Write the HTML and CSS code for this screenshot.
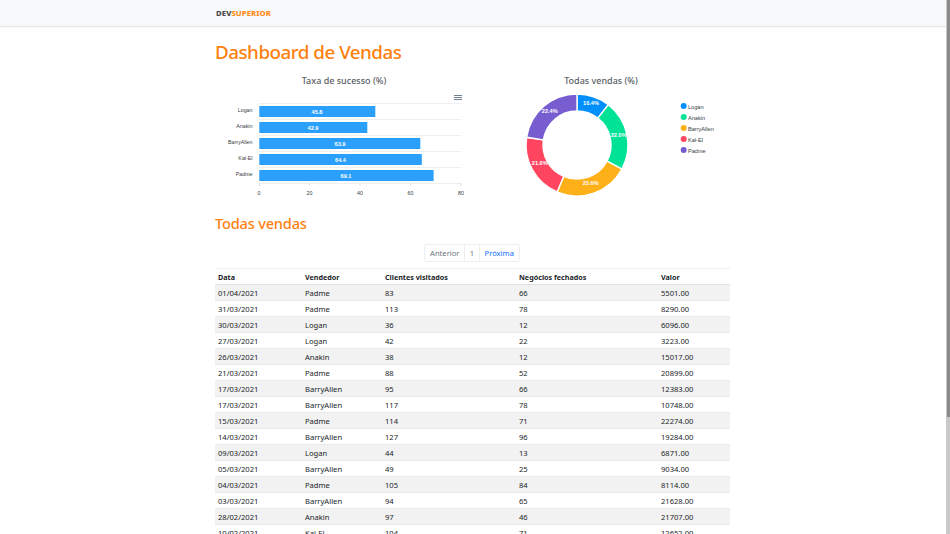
FILE: index.html
```html
<!DOCTYPE html>
<html lang="pt-BR">
<head>
    <meta charset="UTF-8">
    <meta name="viewport" content="width=device-width, initial-scale=1.0">
    <title>DSVendas</title>
    <link rel="stylesheet" href="styles.css">
</head>
<body>
    <header class="navbar">
        <div class="container">
            <span class="logo">DEV<span class="logoAccent">SUPERIOR</span></span>
        </div>
    </header>
    <main class="container">
        <h1 class="title">Dashboard de Vendas</h1>
        <div class="charts">
            <svg class="barChart" width="258" height="135" viewBox="0 0 258 135">
                <text class="chartTitle" x="129" y="14">Taxa de sucesso (%)</text>
                <!-- menu -->
                <path class="menuIcon" d="M239 25.5h8M239 27.5h8M239 29.5h8"/>
                <!-- grade -->
                <path class="grid" d="M44 33.5h202M44 49.5h202M44 65.5h202M44 81.5h202M44 97.5h202M44 113.5h202"/>
                <rect class="bar" x="44.300" y="36" width="116" height="11"/>
                <rect class="bar" x="44.300" y="52" width="108" height="11"/>
                <rect class="bar" x="44.300" y="68" width="161" height="11"/>
                <rect class="bar" x="44.300" y="84" width="162.500" height="11"/>
                <rect class="bar" x="44.300" y="100" width="174.300" height="11"/>
                <text class="barValue" x="102" y="43.500">45.8</text>
                <text class="barValue" x="98" y="59.500">42.9</text>
                <text class="barValue" x="125" y="75.500">63.9</text>
                <text class="barValue" x="125.500" y="91.500">64.4</text>
                <text class="barValue" x="131" y="107.500">69.1</text>
                <text class="barLabel" x="37.500" y="41.500">Logan</text>
                <text class="barLabel" x="37.500" y="58">Anakin</text>
                <text class="barLabel" x="37.500" y="74">BarryAllen</text>
                <text class="barLabel" x="37.500" y="90">Kal-El</text>
                <text class="barLabel" x="37.500" y="106">Padme</text>
                <path class="axis" d="M44.500 113v3M94.500 113v3M145 113v3M195.500 113v3M246 113v3"/>
                <text class="tick" x="44" y="124.500">0</text>
                <text class="tick" x="94.500" y="124.500">20</text>
                <text class="tick" x="145" y="124.500">40</text>
                <text class="tick" x="195.500" y="124.500">60</text>
                <text class="tick" x="246" y="124.500">80</text>
            </svg>
            <svg class="donutChart" width="258" height="135" viewBox="0 0 258 135">
                <text class="chartTitle" x="128" y="14">Todas vendas (%)</text>
                <g transform="translate(104 75)">
                    <path class="sliceLogan" d="M0 -51A51 51 0 0 1 31.300 -40.300L20.800 -26.900A34 34 0 0 0 0 -34Z"/>
                    <path class="sliceAnakin" d="M31.300 -40.300A51 51 0 0 1 44.900 24.100L30 16.100A34 34 0 0 0 20.800 -26.900Z"/>
                    <path class="sliceBarry" d="M44.900 24.100A51 51 0 0 1 -19.900 47L-13.300 31.300A34 34 0 0 0 30 16.100Z"/>
                    <path class="sliceKal" d="M-19.900 47A51 51 0 0 1 -50.400 -7.700L-33.600 -5.100A34 34 0 0 0 -13.300 31.300Z"/>
                    <path class="slicePadme" d="M-50.400 -7.700A51 51 0 0 1 0 -51L0 -34A34 34 0 0 0 -33.600 -5.100Z"/>
                    <text class="sliceValue" x="14" y="-40">10.4%</text>
                    <text class="sliceValue" x="41.700" y="-8.500">22.0%</text>
                    <text class="sliceValue" x="13.700" y="40">23.6%</text>
                    <text class="sliceValue" x="-37.300" y="20">21.0%</text>
                    <text class="sliceValue" x="-27.300" y="-32.300">22.4%</text>
                </g>
                <g class="legend">
                    <circle class="dotLogan" cx="210.700" cy="36" r="3"/>
                    <circle class="dotAnakin" cx="210.700" cy="47" r="3"/>
                    <circle class="dotBarry" cx="210.700" cy="58" r="3"/>
                    <circle class="dotKal" cx="210.700" cy="69" r="3"/>
                    <circle class="dotPadme" cx="210.700" cy="80" r="3"/>
                    <text x="215" y="38.500">Logan</text>
                    <text x="215" y="49.500">Anakin</text>
                    <text x="215" y="60.500">BarryAllen</text>
                    <text x="215" y="71.500">Kal-El</text>
                    <text x="215" y="82.500">Padme</text>
                </g>
            </svg>
        </div>
        <h2 class="subtitle">Todas vendas</h2>
        <nav class="pagination">
            <span class="pageItem pageOff">Anterior</span>
            <span class="pageItem pageOff">1</span>
            <span class="pageItem pageLink">Próxima</span>
        </nav>
        <table class="salesTable">
            <thead>
                <tr><th class="colDate">Data</th><th class="colSeller">Vendedor</th><th class="colVisited">Clientes visitados</th><th class="colDeals">Negócios fechados</th><th>Valor</th></tr>
            </thead>
            <tbody>
                <tr><td>01/04/2021</td><td>Padme</td><td>83</td><td>66</td><td>5501.00</td></tr>
                <tr><td>31/03/2021</td><td>Padme</td><td>113</td><td>78</td><td>8290.00</td></tr>
                <tr><td>30/03/2021</td><td>Logan</td><td>36</td><td>12</td><td>6096.00</td></tr>
                <tr><td>27/03/2021</td><td>Logan</td><td>42</td><td>22</td><td>3223.00</td></tr>
                <tr><td>26/03/2021</td><td>Anakin</td><td>38</td><td>12</td><td>15017.00</td></tr>
                <tr><td>21/03/2021</td><td>Padme</td><td>88</td><td>52</td><td>20899.00</td></tr>
                <tr><td>17/03/2021</td><td>BarryAllen</td><td>95</td><td>66</td><td>12383.00</td></tr>
                <tr><td>17/03/2021</td><td>BarryAllen</td><td>117</td><td>78</td><td>10748.00</td></tr>
                <tr><td>15/03/2021</td><td>Padme</td><td>114</td><td>71</td><td>22274.00</td></tr>
                <tr><td>14/03/2021</td><td>BarryAllen</td><td>127</td><td>96</td><td>19284.00</td></tr>
                <tr><td>09/03/2021</td><td>Logan</td><td>44</td><td>13</td><td>6871.00</td></tr>
                <tr><td>05/03/2021</td><td>BarryAllen</td><td>49</td><td>25</td><td>9034.00</td></tr>
                <tr><td>04/03/2021</td><td>Padme</td><td>105</td><td>84</td><td>8114.00</td></tr>
                <tr><td>03/03/2021</td><td>BarryAllen</td><td>94</td><td>65</td><td>21628.00</td></tr>
                <tr><td>28/02/2021</td><td>Anakin</td><td>97</td><td>46</td><td>21707.00</td></tr>
                <tr><td>10/02/2021</td><td>Kal-El</td><td>104</td><td>71</td><td>12652.00</td></tr>
            </tbody>
        </table>
    </main>
    <div class="scrollbar"><div class="scrollThumb"></div></div>
</body>
</html>
```

FILE: styles.css
```css
html{
    height: 100%;
    overflow: hidden;
}
body{
    margin: 0;
    height: 100%;
    overflow: hidden;
    padding-right: 4px;
    font-family: "Noto Sans", "Open Sans", sans-serif;
    color: #212529;
    background-color: #fff;
}
.container{
    width: 515px;
    margin-left: 215px;
}
.navbar{
    height: 26px;
    display: flex;
    align-items: center;
    background-color: #f8f9fa;
    border-bottom: 1px solid #e3e5e8;
    box-shadow: 0 1px 2px rgba(0, 0, 0, 0.04);
}
.logo{
    display: block;
    padding-left: 1px;
    font-size: 7.800px;
    line-height: 10px;
    font-weight: 800;
    letter-spacing: 0.05px;
    color: #4a4a4a;
}
.logoAccent{
    color: #ff8a14;
}
.title{
    margin: 12px 0 0 0;
    height: 31px;
    line-height: 26px;
    font-size: 18.800px;
    font-weight: 500;
    letter-spacing: -0.5px;
    color: #ff7f0e;
}
.charts{
    display: flex;
    height: 135px;
}
.barChart,.donutChart{
    display: block;
    flex: none;
}
.chartTitle{
    font-size: 9px;
    font-weight: 500;
    text-anchor: middle;
    fill: #5b6168;
}
.menuIcon{
    fill: none;
    stroke: #6e8192;
    stroke-width: 1;
}
.grid{
    fill: none;
    stroke: #eeeeee;
    stroke-width: 1;
}
.axis{
    fill: none;
    stroke: #e0e0e0;
    stroke-width: 1;
}
.bar{
    fill: #2a9ffb;
}
.barValue,.barLabel,.tick,.legend text,.sliceValue{
    font-family: "Liberation Sans", Arial, sans-serif;
}
.barValue{
    font-size: 5.600px;
    font-weight: 700;
    text-anchor: middle;
    fill: #fff;
}
.barLabel{
    font-size: 5.300px;
    text-anchor: end;
    fill: #373d3f;
}
.tick{
    font-size: 5.300px;
    text-anchor: middle;
    fill: #373d3f;
}
.sliceLogan,.sliceAnakin,.sliceBarry,.sliceKal,.slicePadme{
    stroke: #fff;
    stroke-width: 1.400;
}
.sliceLogan{ fill: #008ffb; }
.sliceAnakin{ fill: #00e396; }
.sliceBarry{ fill: #feb019; }
.sliceKal{ fill: #ff4560; }
.slicePadme{ fill: #775dd0; }
.dotLogan{ fill: #008ffb; }
.dotAnakin{ fill: #00e396; }
.dotBarry{ fill: #feb019; }
.dotKal{ fill: #ff4560; }
.dotPadme{ fill: #775dd0; }
.sliceValue{
    font-size: 5.600px;
    font-weight: 700;
    text-anchor: middle;
    fill: #fff;
}
.legend text{
    font-size: 5.600px;
    fill: #373d3f;
}
.subtitle{
    margin: 8px 0 0 0;
    height: 20px;
    line-height: 20px;
    font-size: 14.600px;
    font-weight: 500;
    letter-spacing: -0.2px;
    color: #ff7f0e;
}
.pagination{
    display: flex;
    justify-content: center;
    margin-top: 11px;
    margin-bottom: 6px;
}
.pageItem{
    height: 16px;
    line-height: 16px;
    padding: 0 4.700px;
    font-size: 7.600px;
    background-color: #fff;
    border: 1px solid #eceef0;
    margin-left: -1px;
}
.pageItem:first-child{
    border-radius: 2.500px 0 0 2.500px;
}
.pageItem:last-child{
    border-radius: 0 2.500px 2.500px 0;
}
.pageOff{
    color: #6c757d;
}
.pageLink{
    color: #0d6efd;
}
.salesTable{
    width: 100%;
    table-layout: fixed;
    border-collapse: collapse;
    font-size: 7.600px;
}
.salesTable th{
    height: 15px;
    padding: 0 3px;
    text-align: left;
    font-size: 7.200px;
    font-weight: 700;
    border-top: 1px solid #eceef0;
    border-bottom: 1px solid #dee2e6;
}
.salesTable td{
    height: 15px;
    padding: 0 3px;
    border-bottom: 1px solid #e9ecef;
}
.salesTable tbody tr:nth-child(odd){
    background-color: #f2f2f2;
}
.colDate{
    width: 81px;
}
.colSeller{
    width: 74px;
}
.colVisited{
    width: 128px;
}
.colDeals{
    width: 136px;
}
.scrollbar{
    position: fixed;
    top: 0;
    right: 0;
    width: 4.500px;
    height: 534px;
    background-color: #c9c9c9;
}
.scrollThumb{
    width: 3px;
    height: 417px;
    margin-left: 1px;
    background-color: #8a8a8a;
}
```
